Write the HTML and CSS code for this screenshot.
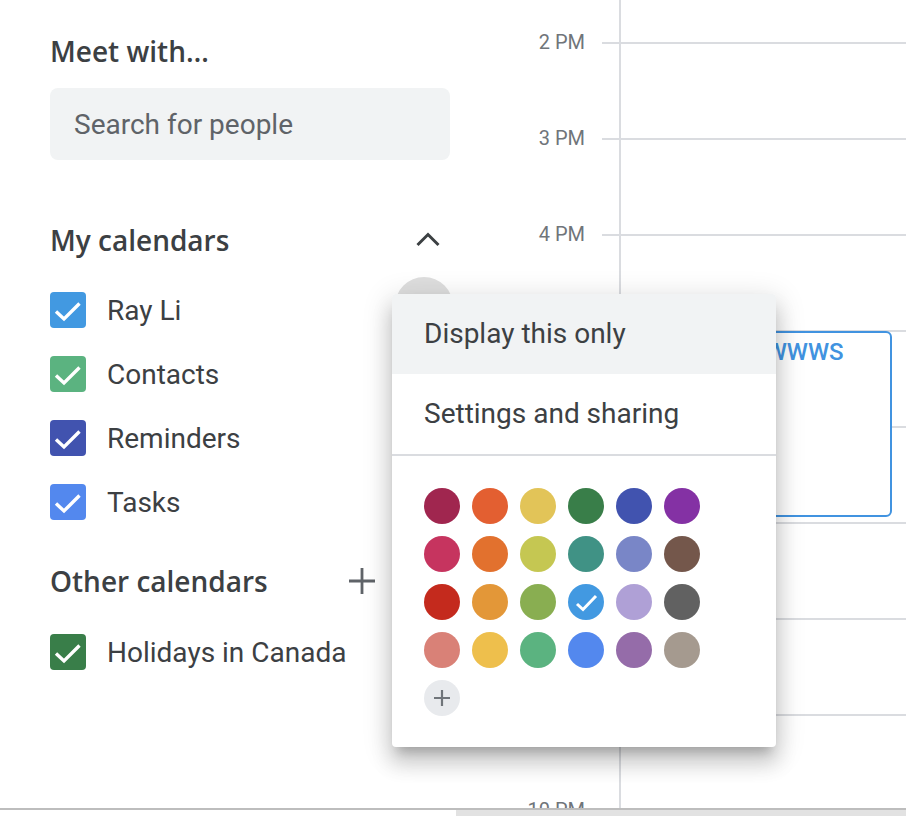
FILE: index.html
```html
<!DOCTYPE html>
<html lang="en">
<head>
  <meta charset="UTF-8">
  <title>Calendar</title>
  <link rel="stylesheet" href="styles.css">
</head>
<body>

  <div class="app">
    <!-- Sidebar -->
    <aside class="sidebar">
      <h2 class="section-title meet-title">Meet with…</h2>
      <input class="search" type="text" placeholder="Search for people">

      <div class="section-head my-head">
        <span class="section-title">My calendars</span>
        <svg class="chevron" width="24" height="24" viewBox="0 0 24 24">
          <polyline points="1.5,17 12,6.5 22.5,17" fill="none" stroke="#3c4043" stroke-width="3"/>
        </svg>
      </div>

      <ul class="cal-list">
        <li class="cal-item">
          <span class="check peacock"><svg width="36" height="36" viewBox="0 0 36 36"><polyline points="6,19.5 14,27 29.5,11.5" fill="none" stroke="#fff" stroke-width="3.4"/></svg></span>
          <span>Ray Li</span>
        </li>
        <li class="cal-item">
          <span class="check sage"><svg width="36" height="36" viewBox="0 0 36 36"><polyline points="6,19.5 14,27 29.5,11.5" fill="none" stroke="#fff" stroke-width="3.4"/></svg></span>
          <span>Contacts</span>
        </li>
        <li class="cal-item">
          <span class="check blueberry"><svg width="36" height="36" viewBox="0 0 36 36"><polyline points="6,19.5 14,27 29.5,11.5" fill="none" stroke="#fff" stroke-width="3.4"/></svg></span>
          <span>Reminders</span>
        </li>
        <li class="cal-item">
          <span class="check cobalt"><svg width="36" height="36" viewBox="0 0 36 36"><polyline points="6,19.5 14,27 29.5,11.5" fill="none" stroke="#fff" stroke-width="3.4"/></svg></span>
          <span>Tasks</span>
        </li>
      </ul>

      <div class="section-head other-head">
        <span class="section-title">Other calendars</span>
        <svg class="plus" width="28" height="28" viewBox="0 0 28 28">
          <path d="M14 1v26M1 14h26" stroke="#5f6368" stroke-width="2.8"/>
        </svg>
      </div>

      <ul class="cal-list other-list">
        <li class="cal-item">
          <span class="check basil"><svg width="36" height="36" viewBox="0 0 36 36"><polyline points="6,19.5 14,27 29.5,11.5" fill="none" stroke="#fff" stroke-width="3.4"/></svg></span>
          <span>Holidays in Canada</span>
        </li>
      </ul>
    </aside>

    <!-- Day grid -->
    <main class="grid">
      <div class="times">
        <div class="time-row"><span class="time-label">2 PM</span><span class="tick"></span></div>
        <div class="time-row"><span class="time-label">3 PM</span><span class="tick"></span></div>
        <div class="time-row"><span class="time-label">4 PM</span><span class="tick"></span></div>
        <div class="time-row"><span class="time-label">5 PM</span><span class="tick"></span></div>
        <div class="time-row"><span class="time-label">6 PM</span><span class="tick"></span></div>
        <div class="time-row"><span class="time-label">7 PM</span><span class="tick"></span></div>
        <div class="time-row"><span class="time-label">8 PM</span><span class="tick"></span></div>
        <div class="time-row"><span class="time-label">9 PM</span><span class="tick"></span></div>
        <div class="time-row"><span class="time-label">10 PM</span><span class="tick"></span></div>
      </div>
      <div class="day">
        <div class="hour"></div>
        <div class="hour"></div>
        <div class="hour"></div>
        <div class="hour"></div>
        <div class="hour"></div>
        <div class="hour"></div>
        <div class="hour"></div>
        <div class="hour"></div>
        <div class="hour"></div>

        <div class="event">
          <div class="event-title">WWWWWWWWS</div>
        </div>
      </div>
    </main>
  </div>

  <div class="hscroll"><div class="hscroll-thumb"></div></div>

  <!-- Options menu for "Ray Li" -->
  <div class="hover-dot"></div>
  <div class="menu">
    <div class="menu-item active">Display this only</div>
    <div class="menu-item">Settings and sharing</div>
    <div class="menu-divider"></div>
    <div class="palette">
      <span class="swatch beetroot"></span>
      <span class="swatch tangerine"></span>
      <span class="swatch citron"></span>
      <span class="swatch basil"></span>
      <span class="swatch blueberry"></span>
      <span class="swatch grape"></span>

      <span class="swatch cherry"></span>
      <span class="swatch pumpkin"></span>
      <span class="swatch avocado"></span>
      <span class="swatch eucalyptus"></span>
      <span class="swatch lavender"></span>
      <span class="swatch cocoa"></span>

      <span class="swatch tomato"></span>
      <span class="swatch mango"></span>
      <span class="swatch pistachio"></span>
      <span class="swatch peacock"><svg width="36" height="36" viewBox="0 0 36 36"><polyline points="9,20 15,25.5 28,12" fill="none" stroke="#fff" stroke-width="3"/></svg></span>
      <span class="swatch wisteria"></span>
      <span class="swatch graphite"></span>

      <span class="swatch flamingo"></span>
      <span class="swatch banana"></span>
      <span class="swatch sage"></span>
      <span class="swatch cobalt"></span>
      <span class="swatch amethyst"></span>
      <span class="swatch birch"></span>

      <span class="swatch add"><svg width="36" height="36" viewBox="0 0 36 36"><path d="M18 10v16M10 18h16" stroke="#70757a" stroke-width="2.2"/></svg></span>
    </div>
  </div>

</body>
</html>
```

FILE: styles.css
```css
body {
  margin: 0;
  font-family: Roboto, Arial, sans-serif;
  color: #3c4043;
  background-color: #fff;
  overflow: hidden;
  height: 816px;
}

.app {
  display: flex;
  height: 808px;
  overflow: hidden;
}

/* Sidebar */

.sidebar {
  width: 470px;
  flex-shrink: 0;
  box-sizing: border-box;
  padding: 35px 20px 0 50px;
}

.section-title {
  font-family: "Open Sans", Lato, sans-serif;
  font-weight: 600;
  font-size: 28px;
  color: #3c4043;
  margin: 0;
}

.meet-title {
  line-height: 32px;
}

.search {
  display: block;
  width: 400px;
  height: 72px;
  box-sizing: border-box;
  margin-top: 21px;
  padding: 0 24px;
  border: none;
  border-radius: 8px;
  background-color: #f1f3f4;
  font-family: Roboto, sans-serif;
  font-size: 28px;
  color: #3c4043;
  outline: none;
}

.search::placeholder {
  color: #5f6368;
}

.section-head {
  display: flex;
  align-items: center;
  justify-content: space-between;
  height: 48px;
  line-height: 48px;
}

.my-head {
  margin-top: 56px;
}

.my-head .chevron {
  margin-right: 10px;
}

.other-head {
  margin-top: 23px;
}

.other-head .plus {
  margin-right: 74px;
}

.cal-list {
  list-style: none;
  margin: 14px 0 0;
  padding: 0;
}

.other-list {
  margin-top: 15px;
}

.cal-item {
  display: flex;
  align-items: center;
  gap: 21px;
  height: 64px;
  font-size: 28px;
}

.check {
  width: 36px;
  height: 36px;
  border-radius: 4px;
  display: flex;
}

/* Day grid */

.grid {
  flex: 1;
  display: flex;
  height: 808px;
  overflow: hidden;
}

.times {
  width: 149px;
  flex-shrink: 0;
  padding-top: 42px;
}

.time-row {
  display: flex;
  height: 96px;
}

.time-label {
  flex: 1;
  text-align: right;
  padding-right: 17px;
  margin-top: -12px;
  line-height: 24px;
  height: 24px;
  font-size: 20px;
  color: #70757a;
}

.tick {
  width: 17px;
  height: 0;
  border-top: 2px solid #dadce0;
}

.day {
  flex: 1;
  position: relative;
  border-left: 2px solid #dadce0;
  padding-top: 42px;
}

.hour {
  height: 96px;
  box-sizing: border-box;
  border-top: 2px solid #dadce0;
}

.event {
  position: absolute;
  top: 331px;
  left: 12px;
  right: 14px;
  height: 186px;
  box-sizing: border-box;
  border: 2px solid #4193e0;
  border-radius: 6px;
  background-color: #fff;
  padding: 5px 12px 5px 25px;
}

.event-title {
  font-size: 24px;
  font-weight: 500;
  line-height: 28px;
  color: #4193e0;
  white-space: nowrap;
  overflow: hidden;
}

.hscroll {
  height: 8px;
  box-sizing: border-box;
  border-top: 2px solid #bdbdbd;
  padding-left: 456px;
}

.hscroll-thumb {
  height: 6px;
  background-color: #e2e2e2;
}

/* Options menu */

.hover-dot {
  position: absolute;
  left: 395px;
  top: 277px;
  width: 58px;
  height: 58px;
  border-radius: 50%;
  background-color: #dedede;
}

.menu {
  position: absolute;
  left: 392px;
  top: 294px;
  width: 384px;
  background-color: #fff;
  border-radius: 4px;
  box-shadow: 0 16px 20px 2px rgba(0, 0, 0, 0.14), 0 6px 28px 4px rgba(0, 0, 0, 0.12), 0 10px 10px -6px rgba(0, 0, 0, 0.2);
  overflow: hidden;
}

.menu-item {
  height: 80px;
  line-height: 80px;
  padding: 0 32px;
  font-size: 28px;
  color: #3c4043;
}

.menu-item.active {
  background-color: #f1f3f4;
}

.menu-divider {
  height: 2px;
  background-color: #dadce0;
}

.palette {
  display: grid;
  grid-template-columns: repeat(6, 36px);
  gap: 12px;
  padding: 32px 32px 31px;
}

.swatch {
  width: 36px;
  height: 36px;
  border-radius: 50%;
  display: flex;
}

.swatch.add {
  background-color: #e8eaed;
}

/* Calendar colours */

.beetroot { background-color: #a0264f; }
.tangerine { background-color: #e35f31; }
.citron { background-color: #e2c458; }
.basil { background-color: #397e49; }
.blueberry { background-color: #4153af; }
.grape { background-color: #8431a4; }
.cherry { background-color: #c6345f; }
.pumpkin { background-color: #e2712e; }
.avocado { background-color: #c5c752; }
.eucalyptus { background-color: #409285; }
.lavender { background-color: #7986c7; }
.cocoa { background-color: #74574b; }
.tomato { background-color: #c42a1d; }
.mango { background-color: #e39738; }
.pistachio { background-color: #89ae51; }
.peacock { background-color: #4299e1; }
.wisteria { background-color: #afa0d6; }
.graphite { background-color: #616161; }
.flamingo { background-color: #d98177; }
.banana { background-color: #eebf4c; }
.sage { background-color: #5bb380; }
.cobalt { background-color: #5388ee; }
.amethyst { background-color: #956ca9; }
.birch { background-color: #a59a8f; }
```
